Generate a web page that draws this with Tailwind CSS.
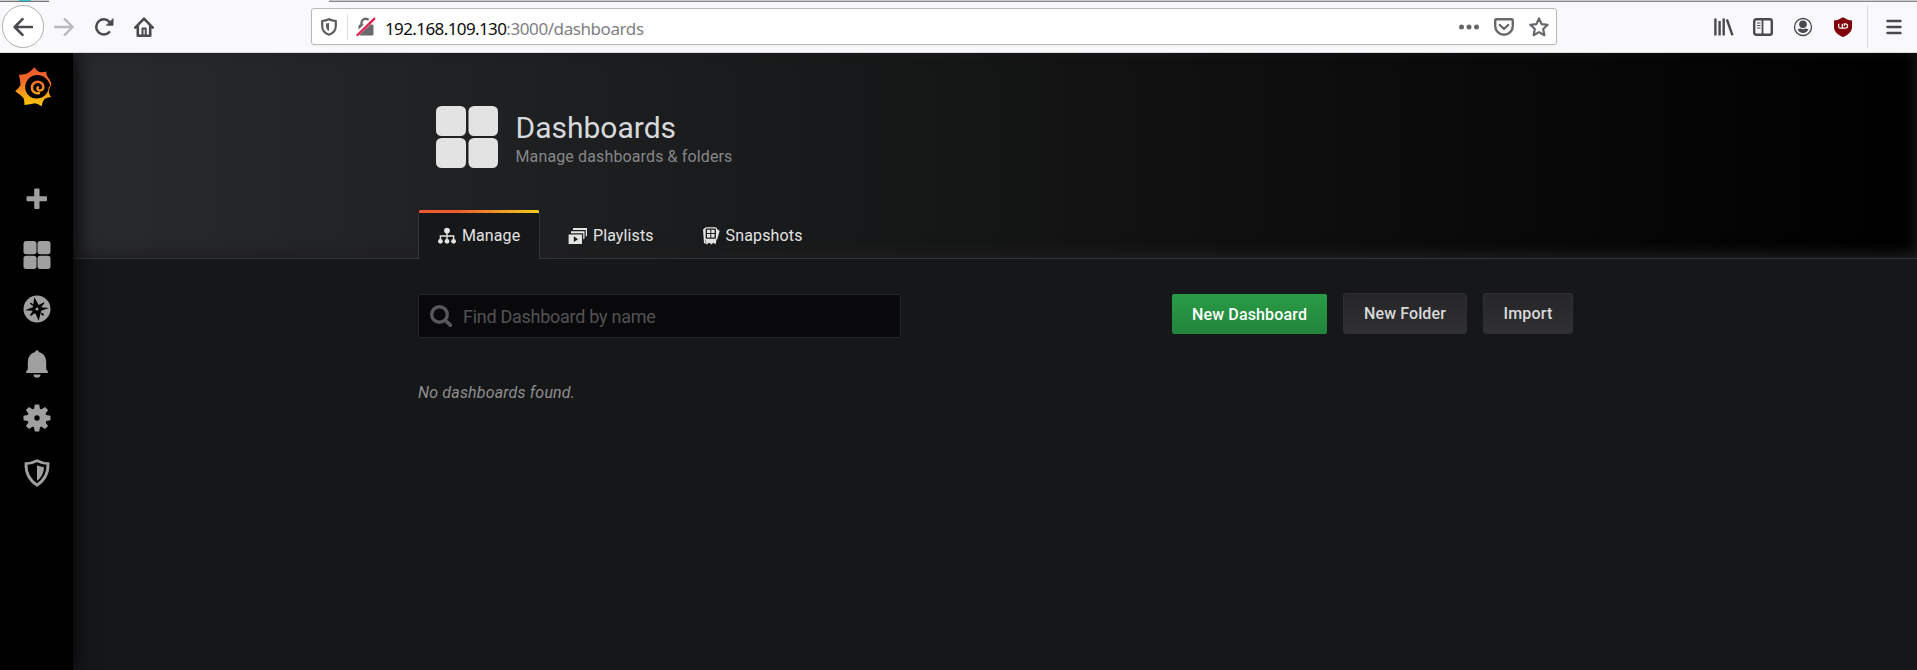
<!DOCTYPE html>
<html lang="en">
<head>
<meta charset="utf-8">
<title>Dashboards - Grafana</title>
<script src="https://cdn.jsdelivr.net/npm/@tailwindcss/browser@4"></script>
</head>
<body class="w-[1917px] h-[670px] overflow-hidden flex flex-col bg-[#161719] font-['Roboto',sans-serif]">
<!-- Browser toolbar -->
<header class="relative z-20 h-[53px] shrink-0 bg-[#f9f9fb] border-b border-[#dcdcde] flex flex-col">
  <div class="h-[2px] flex shrink-0">
    <div class="w-[49px] bg-[#cccccc] border-b border-[#777] flex justify-center"><span class="w-3 h-px bg-[#2bc4d8]"></span></div>
    <div class="w-[280px]"></div>
    <div class="flex-1 bg-[#cccccc] border-b border-[#888]"></div>
  </div>
  <div class="flex-1 flex items-center pb-px">
    <div class="ml-[2px] w-[42px] h-[43px] rounded-full border border-[#b1b1b3] bg-white flex items-center justify-center">
      <svg class="w-5 h-5" viewBox="0 0 20 20" fill="none" stroke="#4a4a4e" stroke-width="2.6" stroke-linecap="round" stroke-linejoin="round"><path d="M19 10H2M9.500 2.200 1.700 10l7.800 7.800"/></svg>
    </div>
    <svg class="ml-[10px] w-5 h-5" viewBox="0 0 20 20" fill="none" stroke="#b9b9bc" stroke-width="2.400" stroke-linecap="round" stroke-linejoin="round"><path d="M1 10h17M10.800 2.200l7.800 7.800-7.800 7.800"/></svg>
    <svg class="ml-[20px] w-5 h-5" viewBox="0 0 20 20" fill="none" stroke="#4a4a4e" stroke-width="2.500" stroke-linecap="round"><path d="M15.300 15.200A7.600 7.600 0 1 1 15.600 5"/><path d="M19 2v6.200H12.800z" fill="#4a4a4e" stroke-width="1" stroke-linejoin="round"/></svg>
    <svg class="ml-[20px] w-5 h-5" viewBox="0 0 20 20" fill="none" stroke="#4a4a4e" stroke-width="2.600" stroke-linecap="round" stroke-linejoin="round"><path d="M1.300 10.600 10 1.600l8.700 9M3.800 9.500v9.200h12.400V9.500"/><path d="M8.500 18v-6.500h3.200V18" stroke-width="2"/></svg>
    <div class="ml-[157px] w-[1246px] h-[37px] rounded-[3px] border border-[#b9b9bc] bg-white flex items-center shadow-[0_1px_3px_rgba(0,0,0,0.05)]">
      <svg class="ml-[9px] w-4 h-[18px]" viewBox="0 0 16 18" fill="none" stroke="#5c5c60" stroke-width="2.200" stroke-linejoin="round"><path d="M1.200 3Q5 2.600 8 1.200 11 2.600 14.800 3V8c0 4.600-3 7.400-6.800 8.800C4.200 15.400 1.200 12.600 1.200 8z"/><path d="M8 5v8C6 12 5 10.500 5 8V5.500z" fill="#5c5c60" stroke="none"/></svg>
      <span class="ml-[10px] w-px h-[26px] bg-[#e0e0e2]"></span>
      <svg class="ml-[8px] w-5 h-5" viewBox="0 0 20 20"><path d="M5.500 8V6a4.200 4.200 0 0 1 8.400 0v2" fill="none" stroke="#6a6a6e" stroke-width="2.400"/><rect x="2.500" y="7.500" width="15" height="11" rx="1.500" fill="#6a6a6e"/><path d="M.8 17.400 17.800 1.200" stroke="#fff" stroke-width="4.600"/><path d="M1.500 18 18.200 1.800" stroke="#e0224e" stroke-width="2.400" stroke-linecap="round"/></svg>
      <p class="ml-[9px] mt-[3px] text-[17px] leading-none text-[#808084] font-['Noto_Sans',sans-serif]"><span class="text-[#0c0c0d] tracking-[-0.600px]">192.168.109.130</span><span class="tracking-[-0.420px]">:3000/dashboards</span></p>
      <div class="ml-auto mr-[7px] flex items-center">
        <svg class="w-5 h-5" viewBox="0 0 20 20" fill="#68686c"><circle cx="2.500" cy="10" r="2.500"/><circle cx="10" cy="10" r="2.500"/><circle cx="17.500" cy="10" r="2.500"/></svg>
        <svg class="ml-[15px] w-5 h-5" viewBox="0 0 20 20" fill="none" stroke="#68686c" stroke-width="2.400" stroke-linecap="round" stroke-linejoin="round"><path d="M2.400 2.200h15.200q1.200 0 1.200 1.200V9a8.800 8.800 0 0 1-17.600 0V3.400q0-1.200 1.200-1.200z"/><path d="m5.800 8 4.200 4 4.200-4"/></svg>
        <svg class="ml-[15px] w-5 h-5" viewBox="0 0 20 20" fill="none" stroke="#68686c" stroke-width="2.200" stroke-linejoin="round"><path d="m10 1.500 2.600 5.600 6.100.7-4.500 4.200 1.200 6.200-5.400-3.100-5.400 3.100L5.800 12 1.300 7.800l6.100-.7z"/></svg>
      </div>
    </div>
    <svg class="ml-[157px] w-5 h-5" viewBox="0 0 20 20" fill="none" stroke="#4a4a4e" stroke-width="2.400"><path d="M1.400 1.500v17M5.600 4v14.500M9.700 1.500v17M12.900 2.500l5.600 15.800"/></svg>
    <svg class="ml-[19px] w-5 h-5" viewBox="0 0 20 20" fill="none" stroke="#4a4a4e"><rect x="1.200" y="2.200" width="17.600" height="15.500" rx="2" stroke-width="2.400"/><path d="M9.500 3v14.500" stroke-width="1.800"/><path d="M4 6h3.500M4 8.500h3.500M4 11h3.500" stroke-width="1.200"/></svg>
    <svg class="ml-[20px] w-5 h-5" viewBox="0 0 20 20"><circle cx="10" cy="10" r="8.500" fill="none" stroke="#4a4a4e" stroke-width="1.300"/><circle cx="10" cy="7.300" r="3.800" fill="#4a4a4e"/><path d="M4.500 12.300q2-.8 3.200-.8 2.300 1.300 4.600 0 1.200 0 3.200.8a6 6 0 0 1-11 0z" fill="#4a4a4e"/></svg>
    <svg class="ml-[20px] w-5 h-5" viewBox="0 0 20 20"><path d="M10 .2Q14.500 3.200 19 3.400V10c0 5-4 7.800-9 10C5 17.800 1 15 1 10V3.400Q5.500 3.200 10 .2z" fill="#7f0008"/><path d="M5.700 6.800v2.600q0 1.800 1.700 1.800H9.300V6.800M9.800 11.200h2.200q2.600 0 2.600-2.200T12.300 6.800H11.300V9" fill="none" stroke="#fff" stroke-width="1.200"/></svg>
    <span class="ml-[14px] w-px h-[42px] bg-[#d7d7db]"></span>
    <svg class="ml-[16px] w-5 h-5" viewBox="0 0 20 20" stroke="#4a4a4e" stroke-width="2.400" stroke-linecap="round"><path d="M3.500 4h13M3.500 10h13M3.500 16h13"/></svg>
  </div>
</header>

<div class="flex-1 flex min-h-0">
  <!-- Side menu -->
  <nav class="relative z-10 w-[73px] shrink-0 bg-black shadow-[0_0_22px_black] flex flex-col items-start">
    <svg class="ml-[14px] mt-[13px] w-[39px] h-[42px]" viewBox="14 66 39 42">
      <defs><linearGradient id="g" gradientUnits="userSpaceOnUse" x1="0" y1="67" x2="0" y2="106"><stop offset="0" stop-color="#f05a28"/><stop offset=".3" stop-color="#f1642a"/><stop offset="1" stop-color="#fbca0a"/></linearGradient></defs>
      <path fill="url(#g)" d="M34.500 67.300Q36.500 71 39.500 72 43 72.500 46.400 71.500 46 75 48 77.500 51.500 81 51.300 87L50.200 86.500Q49.500 89 48.800 91 48.800 94 51 97Q46.500 97.500 44.500 99 42 102 41.600 106.200 38 103.500 35 103.200 30 104.500 24.500 105 24.500 101 23.500 98 20 94.500 15.200 91.300 19 88 20.500 85 20.500 80 18.800 74.500 23 75 27 73.500 31.500 71 34.500 67.300z"/>
      <path d="M51 87.500C48.500 78.500 43 75 37.500 75 30 75 25.200 81 25.200 87.300 25.200 94 30.500 98.500 36.500 98.500 43 98.500 48.500 94 49 86z"/>
      <path fill="none" stroke="url(#g)" stroke-width="2.500" stroke-linecap="round" d="M39 93.200C35 93.800 31.800 91.300 31.900 87.500 32 83.800 34.800 81.700 38 81.800 41.500 82 43.600 84.600 43.300 87.600 43 90.300 40.500 91 38.800 90.300 37.200 89.600 37 88 38 87.300"/>
    </svg>
    <div class="mt-[76.500px] w-full flex flex-col items-center text-[#a0a0a1] gap-[26.500px]">
      <svg class="mb-[1.500px] w-7 h-7" viewBox="0 0 28 28" fill="currentColor"><path d="M11.200 4.500q0-1 1-1h3.300q1 0 1 1v6.800H23q1 0 1 1v3q0 1-1 1h-6.500V23q0 1-1 1h-3.300q-1 0-1-1v-6.700H4.500q-1 0-1-1v-3q0-1 1-1h6.700z"/></svg>
      <svg class="w-7 h-7" viewBox="0 0 28 28" fill="currentColor"><rect x=".5" y="0" width="13" height="13.300" rx="2.700"/><rect x="14.500" y="0" width="13" height="13.300" rx="2.700"/><rect x=".5" y="14.700" width="13" height="13.300" rx="2.700"/><rect x="14.500" y="14.700" width="13" height="13.300" rx="2.700"/></svg>
      <svg class="w-7 h-7" viewBox="0 0 28 28"><circle cx="14" cy="14" r="13.500" fill="currentColor"/><path fill="#000" d="M11.300 2.300 15.700 9.900 20.800 7.600 18.300 12.300 26 13 18.200 15.700 15.700 25.800 12.300 18.200 7.200 20.400 9.700 15.700 2 15.200 9.800 12.300z"/><path d="m7.500 8 2.300 2.300M20.800 8l-2.300 2.300M7.500 20.400l2.300-2.300m10.800 2.300-2.300-2.300" stroke="#000" stroke-width="1.600"/><circle cx="14" cy="14" r="1.500" fill="currentColor"/></svg>
      <svg class="w-7 h-7" viewBox="0 0 28 28" fill="currentColor"><path d="M12.300 1q1.700-1.600 3.400 0v1Q23 4 23.200 11.500V19.500l1.600 1.400v2.100H3.200v-2.100L4.800 19.500V11.500Q5 4 12.300 2zM10.300 24.500h7.400q-.8 3.300-3.700 3.300t-3.700-3.300z"/></svg>
      <svg class="w-7 h-7" viewBox="0 0 28 28"><circle cx="14" cy="14" r="9.700" fill="currentColor"/><g fill="currentColor"><path id="t" d="m10.800 6 1-5.500h4.400l1 5.500z"/><use href="#t" transform="rotate(45 14 14)"/><use href="#t" transform="rotate(90 14 14)"/><use href="#t" transform="rotate(135 14 14)"/><use href="#t" transform="rotate(180 14 14)"/><use href="#t" transform="rotate(225 14 14)"/><use href="#t" transform="rotate(270 14 14)"/><use href="#t" transform="rotate(315 14 14)"/></g><circle cx="14" cy="14" r="2.700" fill="#000"/></svg>
      <svg class="w-7 h-7" viewBox="0 0 28 28"><path d="M14 1.700Q20 4.500 25 4.700 25.500 18.500 14 26.200 2.500 18.500 3 4.700 8 4.500 14 1.700z" fill="none" stroke="currentColor" stroke-width="2.800"/><path d="M14 6.300Q17.500 8 21 8.300 20.800 16.500 14 22z" fill="currentColor"/></svg>
    </div>
  </nav>

  <main class="flex-1 min-w-0 flex flex-col">
    <section class="h-[206px] shrink-0 border-b border-[#333436] bg-[linear-gradient(90deg,#292a2d,#1a1b1c_35%,#000)] shadow-[inset_0_-4px_14px_#1f1f20] pl-[345px] flex flex-col justify-between">
      <div class="mt-[53px] ml-[18px] flex">
        <svg class="w-[62px] h-[62px]" viewBox="0 0 62 62" fill="#e3e3e3"><rect width="30" height="30" rx="5.500"/><rect x="32.500" width="29.500" height="30" rx="5.500"/><rect y="32" width="30" height="30" rx="5.500"/><rect x="32.500" y="32" width="29.500" height="30" rx="5.500"/></svg>
        <div class="ml-[17.500px] mt-[4px]">
          <h1 class="text-[30px] leading-[36px] text-[#d8d9da]">Dashboards</h1>
          <p class="text-[16px] leading-[22px] tracking-[0.130px] text-[#868788]">Manage dashboards &amp; folders</p>
        </div>
      </div>
      <div class="flex items-end text-[16px] text-[#e3e3e3] h-[48px] -mb-px">
        <div class="w-[122px] h-[49px] flex flex-col rounded-t-[3px] overflow-hidden bg-[#161719]">
          <div class="h-[3px] mx-px bg-[linear-gradient(90deg,#eb5a30_30%,#f2cc1c_99%)]"></div>
          <div class="flex-1 flex items-center pl-[19px] border-x border-[#333436]">
            <svg class="w-[18px] h-[18px]" viewBox="0 0 18 18" fill="currentColor"><circle cx="9" cy="3.600" r="2.900"/><circle cx="2.400" cy="14.300" r="2.400"/><circle cx="9" cy="14.300" r="2.400"/><circle cx="15.600" cy="14.300" r="2.400"/><path d="M9 5v8M2.400 13V9h13.200v4" fill="none" stroke="currentColor" stroke-width="1.400"/></svg>
            <span class="ml-[6px] tracking-[0.100px]">Manage</span>
          </div>
        </div>
        <div class="h-[46px] flex items-center ml-[28px]">
          <svg class="w-[19px] h-[18px]" viewBox="0 0 19 18" fill="currentColor"><path d="M5 1h14v8l-1.300.5V3H5zM3 4.200h13.500v7.600l-1.300.7V6.200H3zM.6 7.400h13.400V17H.6z"/><path d="m5.800 9.300 4.200 2.900-4.200 2.900z" fill="#1b1c1e"/></svg>
          <span class="ml-[6px] tracking-[0.100px]">Playlists</span>
        </div>
        <div class="h-[46px] flex items-center ml-[48px]">
          <svg class="w-[19px] h-[18px]" viewBox="0 0 19 18" fill="currentColor"><path d="M1 2.500 3 1v11l1 5-2-1zM14.500 2l3.200 1.800-2.600 9-.6-.5zM3.500 12.500h11l-.8 4.700-2.500-1.400-1.500 1.700-2.500-1.700-2.700 1.700z"/><rect x="3" y=".8" width="11.600" height="11.600" rx="1.600" fill="#1b1c1e" stroke="currentColor" stroke-width="1.300"/><path d="M5 2.800h3.300v3.300H5zM9.300 2.800h3.300v3.300H9.300zM5 7.100h3.300v3.300H5zM9.300 7.100h3.300v3.300H9.300z"/></svg>
          <span class="ml-[5px] tracking-[0.150px]">Snapshots</span>
        </div>
      </div>
    </section>

    <section class="pl-[345px] pr-[344px] pt-[34px] flex flex-col">
      <div class="flex items-start">
        <div class="mt-px w-[483px] h-[44px] rounded-[3px] border border-[#262628] bg-[#09090b] flex items-center">
          <svg class="ml-[11px] w-[22px] h-[22px]" viewBox="0 0 22 22" fill="none" stroke="#58585a" stroke-width="3.400" stroke-linecap="round"><circle cx="9.500" cy="9.500" r="7.800"/><path d="m15.500 15.500 4.800 4.700" stroke-width="3.800"/></svg>
          <span class="ml-[11px] text-[18px] tracking-[-0.270px] text-[#525254]">Find Dashboard by name</span>
        </div>
        <div class="ml-auto flex items-start text-[16px] font-medium text-[#d8d9da]">
          <button class="mt-px pt-px w-[155px] h-[40px] rounded-[2px] bg-[linear-gradient(#299c46,#23843b)] text-white tracking-[0.150px]">New Dashboard</button>
          <button class="ml-[16px] pt-px w-[124px] h-[41px] rounded-[3px] border border-[#2f2f32] bg-[linear-gradient(#262628,#303032)] tracking-[0.100px]">New Folder</button>
          <button class="ml-[16px] pt-px w-[90px] h-[41px] rounded-[3px] border border-[#2f2f32] bg-[linear-gradient(#262628,#303032)] tracking-[0.200px]">Import</button>
        </div>
      </div>
      <em class="mt-[44px] text-[16px] leading-[22px] tracking-[0.170px] text-[#8e8e8e]">No dashboards found.</em>
    </section>
  </main>
</div>
</body>
</html>
